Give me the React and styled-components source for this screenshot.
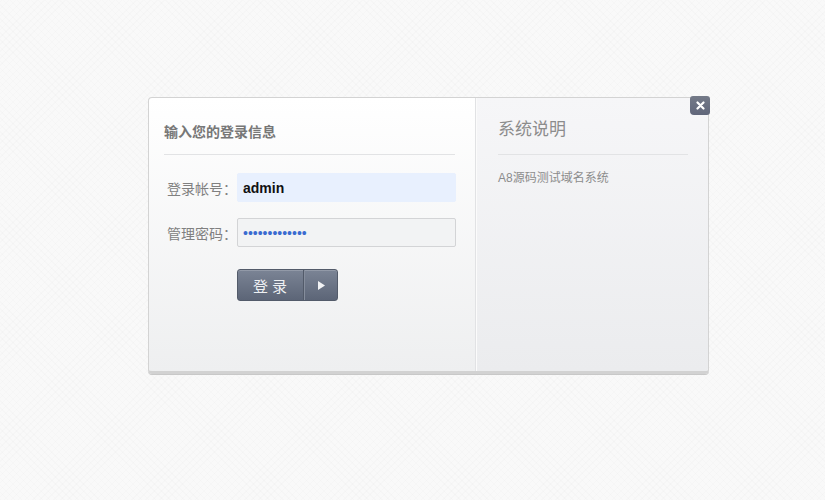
import React, { useState } from "react";
import styled, { createGlobalStyle } from "styled-components";

const GlobalStyle = createGlobalStyle`
  html, body {
    margin: 0;
    padding: 0;
  }
  body {
    min-height: 500px;
    font-family: "Liberation Sans", "Noto Sans CJK SC", sans-serif;
    background-color: #f9f9f9;
    background-image: repeating-linear-gradient(
        45deg,
        rgba(0, 0, 0, 0.012) 0px,
        rgba(0, 0, 0, 0.012) 1px,
        transparent 1px,
        transparent 5px
      ),
      repeating-linear-gradient(
        -45deg,
        rgba(0, 0, 0, 0.012) 0px,
        rgba(0, 0, 0, 0.012) 1px,
        transparent 1px,
        transparent 5px
      );
  }
`;

const Page = styled.div`
  padding: 97px 0 0 148px;
`;

const Card = styled.div`
  position: relative;
  width: 559px;
  height: 273px;
  display: flex;
  border: 1px solid #d3d3d3;
  border-bottom: 3px solid #d2d2d2;
  border-radius: 4px;
  background: linear-gradient(#ffffff, #eeeff0);
  box-shadow: 0 1px 0 #c8c8c8;
`;

const LeftPane = styled.div`
  width: 327px;
  flex-shrink: 0;
  padding: 0 20px 0 15px;
  box-sizing: border-box;
  border-right: 1px solid #e1e2e4;
`;

const RightPane = styled.div`
  flex: 1;
  padding: 0 20px 0 21px;
  border-left: 1px solid #fbfbfb;
  border-radius: 0 4px 4px 0;
  background: linear-gradient(#f6f6f8, #ebecee);
`;

const Heading = styled.h3`
  margin: 0;
  padding: ${(p) => (p.large ? "20px 0 16px 0" : "23px 0 13px 0")};
  border-bottom: 1px solid #e2e3e5;
  font-size: ${(p) => (p.large ? "17px" : "14px")};
  font-weight: ${(p) => (p.large ? 400 : 700)};
  line-height: 20px;
  color: ${(p) => (p.large ? "#8c8c8c" : "#777")};
  font-family: "Noto Sans CJK SC", sans-serif;
`;

const Form = styled.form`
  display: flex;
  flex-direction: column;
  padding-top: 18px;
`;

const Row = styled.div`
  display: flex;
  align-items: center;
  margin-bottom: ${(p) => p.gap}px;
`;

const Label = styled.label`
  flex: 0 0 73px;
  padding-left: 3px;
  box-sizing: border-box;
  white-space: nowrap;
  font-size: 14px;
  color: #808080;
  font-family: "Noto Sans CJK SC", sans-serif;
`;

const Field = styled.input`
  flex: 0 0 219px;
  width: 219px;
  height: 29px;
  box-sizing: border-box;
  padding: 0 5px;
  border: 1px solid ${(p) => (p.filled ? "#e8f0fe" : "#d3d4d6")};
  border-radius: 2px;
  background: ${(p) => (p.filled ? "#e8f0fe" : "#f2f3f4")};
  font-family: "Liberation Sans", sans-serif;
  font-size: 14px;
  font-weight: ${(p) => (p.filled ? 700 : 400)};
  color: ${(p) => (p.filled ? "#111" : "#3a6bd0")};
  outline: none;
`;

const ButtonGroup = styled.div`
  display: flex;
  margin-left: 73px;
  width: 101px;
  height: 32px;
  box-sizing: border-box;
  border: 1px solid #535b6a;
  border-radius: 3px;
  overflow: hidden;
  background: linear-gradient(#7b8495, #5c6577);
  box-shadow: inset 0 1px 0 rgba(255, 255, 255, 0.18);
`;

const Submit = styled.button`
  width: 66px;
  padding: 0 0 0 3px;
  border: 0;
  border-right: 1px solid #525a69;
  background: transparent;
  color: #eef0f3;
  font-size: 15px;
  letter-spacing: 4px;
  font-family: "Noto Sans CJK SC", sans-serif;
  cursor: pointer;
`;

const Arrow = styled.button`
  flex: 1;
  display: flex;
  align-items: center;
  justify-content: center;
  border: 0;
  border-left: 1px solid #858d9c;
  background: transparent;
  padding: 0;
  cursor: pointer;
`;

const Note = styled.p`
  margin: 15px 0 0;
  font-size: 12px;
  line-height: 16px;
  color: #8c8c8c;
  font-family: "Liberation Sans", "Noto Sans CJK SC", sans-serif;
`;

const Close = styled.button`
  position: absolute;
  top: -2px;
  right: -2px;
  width: 20px;
  height: 19px;
  display: flex;
  align-items: center;
  justify-content: center;
  padding: 0;
  border: 0;
  border-radius: 3px 3px 3px 4px;
  background: linear-gradient(#747a88, #60667a);
  cursor: pointer;
`;

export default function App() {
  const [user, setUser] = useState("admin");
  const [pass, setPass] = useState("1234567890123");

  return (
    <>
      <GlobalStyle />
      <Page>
        <Card>
          <LeftPane>
            <Heading>输入您的登录信息</Heading>
            <Form onSubmit={(e) => e.preventDefault()}>
              <Row gap={16}>
                <Label>登录帐号：</Label>
                <Field
                  filled
                  value={user}
                  onChange={(e) => setUser(e.target.value)}
                />
              </Row>
              <Row gap={22}>
                <Label>管理密码：</Label>
                <Field
                  type="password"
                  value={pass}
                  onChange={(e) => setPass(e.target.value)}
                />
              </Row>
              <ButtonGroup>
                <Submit type="submit">登录</Submit>
                <Arrow type="button">
                  <svg width="7" height="9" viewBox="0 0 7 9">
                    <path d="M0 0 L7 4.5 L0 9 Z" fill="#f2f3f5" />
                  </svg>
                </Arrow>
              </ButtonGroup>
            </Form>
          </LeftPane>
          <RightPane>
            <Heading large>系统说明</Heading>
            <Note>A8源码测试域名系统</Note>
          </RightPane>
          <Close aria-label="关闭">
            <svg width="9" height="9" viewBox="0 0 9 9">
              <path
                d="M1.5 1.5 L7.5 7.5 M7.5 1.5 L1.5 7.5"
                stroke="#fff"
                strokeWidth="2.2"
                strokeLinecap="round"
              />
            </svg>
          </Close>
        </Card>
      </Page>
    </>
  );
}
